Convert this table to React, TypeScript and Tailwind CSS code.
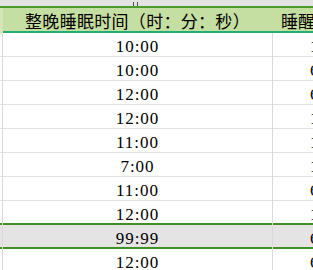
import React from "react";

const rows = [
  { time: "10:00", wake: "1" },
  { time: "10:00", wake: "6" },
  { time: "12:00", wake: "6" },
  { time: "12:00", wake: "1" },
  { time: "11:00", wake: "1" },
  { time: "7:00", wake: "1" },
  { time: "11:00", wake: "6" },
  { time: "12:00", wake: "1" },
];

const cellFont = { fontFamily: '"Liberation Serif", serif' };
const cjkFont = { fontFamily: '"Noto Sans CJK SC", "Noto Sans", sans-serif' };

function Row({ time, wake, className = "" }: { time: string; wake: string; className?: string }) {
  return (
    <div className={`grid grid-cols-[2px_1px_269px_1px_1fr] ${className}`}>
      <div />
      <div className="bg-[#dadada]" />
      <div
        className="flex items-center justify-center pt-[1px] text-[17px] tracking-[1px] text-black"
        style={cellFont}
      >
        {time}
      </div>
      <div className="bg-[#dadada]" />
      <div
        className="flex items-center overflow-hidden whitespace-nowrap pl-[37px] pt-[1px] text-[17px] text-black"
        style={cellFont}
      >
        {wake}:00
      </div>
    </div>
  );
}

export default function App() {
  return (
    <div className="w-[313px] h-[270px] overflow-hidden bg-white">
      {/* strip above header */}
      <div className="h-[6px] bg-[#e3e3e3] flex overflow-hidden">
        <div className="ml-[133px] flex gap-[3px] items-end">
          <div className="w-[1px] h-[4px] bg-[#555]" />
          <div className="w-[1px] h-[4px] bg-[#555]" />
        </div>
      </div>
      <div className="h-[2px] bg-[#4a9a2c]" />

      {/* header */}
      <div className="h-[23px] bg-[#c5dea1] grid grid-cols-[3px_269px_1px_1fr]">
        <div className="bg-[#d4e6b8]" />
        <div className="flex items-center justify-center text-[17px] tracking-[0.3px] text-black whitespace-nowrap" style={cjkFont}>
          整晚睡眠时间（时：分：秒）
        </div>
        <div />
        <div className="flex items-center pl-[8px] text-[17px] text-black whitespace-nowrap overflow-hidden" style={cjkFont}>
          睡醒时间
        </div>
      </div>
      <div className="h-[2px] bg-[#1fae73]" />

      {rows.map((r, i) => (
        <Row
          key={i}
          time={r.time}
          wake={r.wake}
          className={i === rows.length - 1 ? "h-[22px]" : "h-[24px] border-b border-[#e2e2e2]"}
        />
      ))}

      {/* selected row */}
      <Row
        time="99:99"
        wake="6"
        className="h-[26px] border-y-2 border-[#3f8f22] bg-[#e4e4e4]"
      />

      <Row time="12:00" wake="6" className="h-[24px] border-b border-[#e2e2e2]" />
    </div>
  );
}
